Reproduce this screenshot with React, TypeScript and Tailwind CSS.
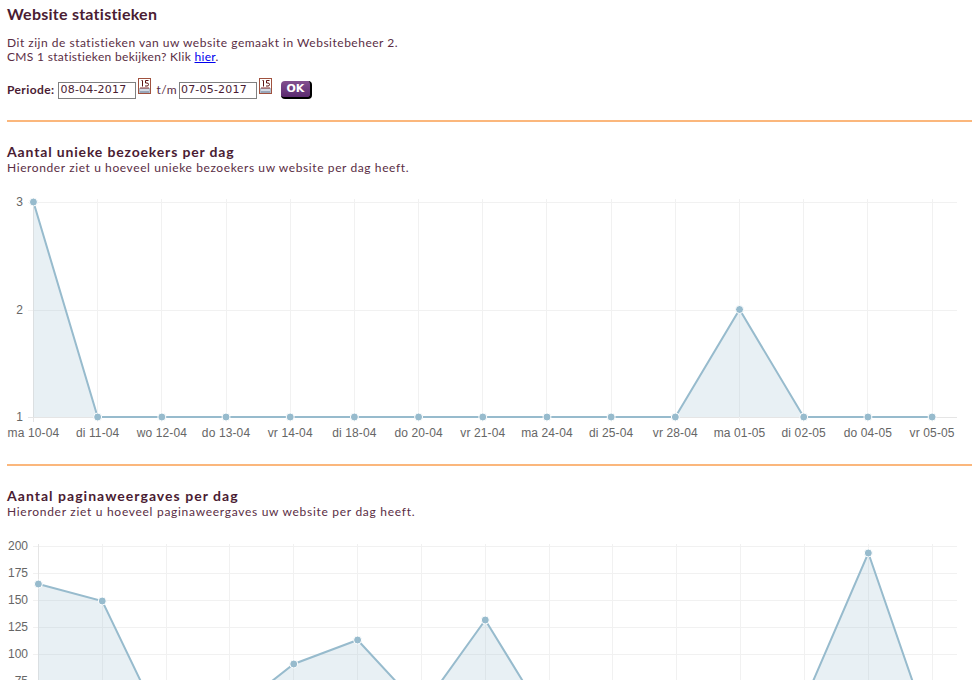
const gothic = "font-['Lato','Noto_Sans',sans-serif]";

type Pt = [number, number];

function Chart({
  xs,
  ys,
  points,
  labels,
  xLabels,
  left,
  top,
  bottom,
  height,
  axisY,
}: {
  xs: number[];
  ys: number[];
  points: Pt[];
  labels: string[];
  xLabels?: string[];
  left: number;
  top: number;
  bottom: number;
  height: number;
  axisY: number;
}) {
  const line = points.map((p) => p.join(",")).join(" ");
  const area = `${points[0][0]},${axisY} ${line} ${points[points.length - 1][0]},${axisY}`;
  return (
    <svg width={972} height={height} viewBox={`0 0 972 ${height}`} className="block">
      {ys.map((y, i) => (
        <g key={y}>
          <line x1={left - 5} x2={957} y1={y + 0.5} y2={y + 0.5} stroke={i === ys.length - 1 && xLabels ? "#e5e5e5" : "#f1f1f1"} />
          <text x={left - 10} y={y + 4} textAnchor="end" fontSize="12" fill="#666" fontFamily="Liberation Sans, sans-serif">
            {labels[i]}
          </text>
        </g>
      ))}
      {xs.map((x, i) => (
        <line key={x} x1={Math.floor(x) + 0.5} x2={Math.floor(x) + 0.5} y1={top} y2={bottom} stroke={i === 0 ? "#e5e5e5" : "#f1f1f1"} />
      ))}
      <polygon points={area} fill="rgba(151,187,205,0.22)" />
      <polyline points={line} fill="none" stroke="#97bbcd" strokeWidth="2" />
      {points.map(([x, y]) => (
        <circle key={x} cx={x} cy={y} r="4" fill="#97bbcd" stroke="#fff" strokeWidth="1" />
      ))}
      {xLabels?.map((t, i) => (
        <text key={t} x={xs[i]} y={bottom + 15} textAnchor="middle" fontSize="12" letterSpacing="0.12" fill="#666" fontFamily="Liberation Sans, sans-serif">
          {t}
        </text>
      ))}
    </svg>
  );
}

function CalendarIcon() {
  return (
    <svg width="13" height="16" viewBox="0 0 13 16" className="block">
      <rect x="0.5" y="0.5" width="12" height="15" fill="#b4bfce" stroke="#a0523f" />
      <rect x="1" y="1" width="11" height="9" fill="#fff" />
      <rect x="2" y="9.5" width="9" height="1" fill="#8a3030" />
      <rect x="2" y="11.5" width="9" height="1" fill="#f4f6f9" />
      <rect x="2" y="13.5" width="9" height="1" fill="#7f8da3" />
      <path d="M3.5 2.5 H4.5 V8.5 M7 8 H9 Q10.5 8 10.5 6.5 Q10.5 5 9 5 H7.5 V2.5 H10.5" fill="none" stroke="#5e1414" strokeWidth="1" />
    </svg>
  );
}

function DateField({ value }: { value: string }) {
  return (
    <span className="flex h-[17px] w-[78px] items-center border border-[#808080] pl-[1px] font-['DejaVu_Sans',sans-serif] text-[11px] tracking-[0.2px] text-[#4a1c33]">
      {value}
    </span>
  );
}

const x1 = Array.from({ length: 15 }, (_, i) => 33.45 + 64.19 * i);
const labels1 = ["ma 10-04", "di 11-04", "wo 12-04", "do 13-04", "vr 14-04", "di 18-04", "do 20-04", "vr 21-04", "ma 24-04", "di 25-04", "vr 28-04", "ma 01-05", "di 02-05", "do 04-05", "vr 05-05"];
const vals1 = [3, 1, 1, 1, 1, 1, 1, 1, 1, 1, 1, 2, 1, 1, 1];
const yOf1 = (v: number) => 417 - (v - 1) * 107.5 - 195;
const pts1: Pt[] = x1.map((x, i) => [x, yOf1(vals1[i])]);

const x2 = Array.from({ length: 15 }, (_, i) => 38.4 + 63.84 * i);
const y2Top = 540;
const raw2 = [584, 601, 734, 714, 664, 640, 709, 620, 724, 760, 760, 760, 701, 553, 738];
const pts2: Pt[] = x2.map((x, i) => [x, raw2[i] - y2Top]);

export default function App() {
  return (
    <div className={`h-[680px] w-[972px] overflow-hidden bg-white text-[#4a1c33] ${gothic}`}>
      <div className="pt-[4px] pl-[7px]">
        <h1 className="text-[16px] leading-[20px] font-bold tracking-[0.25px]">Website statistieken</h1>
        <p className="mt-[12px] text-[12px] leading-[14px] text-[#5a2d44]">
          <span className="tracking-[0.51px]">Dit zijn de statistieken van uw website gemaakt in Websitebeheer 2.</span>
          <br />
          <span className="tracking-[0.32px]">
            CMS 1 statistieken bekijken? Klik <a href="#" className="text-[#0000ee] underline">hier</a>.
          </span>
        </p>
        <div className="mt-[16px] flex h-[20px] items-center text-[12px] tracking-[0.4px]">
          <b>Periode:</b>
          <span className="ml-[4px]"><DateField value="08-04-2017" /></span>
          <span className="mb-[9px] ml-[2px]"><CalendarIcon /></span>
          <span className="ml-[5px] text-[#5a2d44]">t/m</span>
          <span className="ml-[2px]"><DateField value="07-05-2017" /></span>
          <span className="mb-[9px] ml-[2px]"><CalendarIcon /></span>
          <span className="ml-[9px] flex h-[18px] w-[31px] items-center justify-center rounded-[4px] border-r-2 border-b-2 border-black bg-gradient-to-b from-[#83508f] to-[#5b2a70] font-['DejaVu_Sans',sans-serif] text-[11px] font-bold tracking-[0px] text-white">OK</span>
        </div>
      </div>
      <div className="mt-[20px] ml-[7px] h-[2px] bg-[#fbb77c]" />
      <div className="pt-[22px] pl-[7px]">
        <h2 className="text-[14px] leading-[16px] font-bold tracking-[0.84px]">Aantal unieke bezoekers per dag</h2>
        <p className="text-[12px] leading-[16px] tracking-[0.6px] text-[#5a2d44]">Hieronder ziet u hoeveel unieke bezoekers uw website per dag heeft.</p>
      </div>
      <div className="mt-[19px]">
        <Chart xs={x1} ys={[7, 115, 222]} points={pts1} labels={["3", "2", "1"]} xLabels={labels1} left={33} top={4} bottom={227} height={250} axisY={222} />
      </div>
      <div className="mt-[19px] ml-[7px] h-[2px] bg-[#fbb77c]" />
      <div className="pt-[22px] pl-[7px]">
        <h2 className="text-[14px] leading-[16px] font-bold tracking-[1.03px]">Aantal paginaweergaves per dag</h2>
        <p className="text-[12px] leading-[16px] tracking-[0.71px] text-[#5a2d44]">Hieronder ziet u hoeveel paginaweergaves uw website per dag heeft.</p>
      </div>
      <div className="mt-[20px]">
        <Chart xs={x2} ys={[6, 33, 60, 87, 114, 141]} points={pts2} labels={["200", "175", "150", "125", "100", "75"]} left={38} top={4} bottom={240} height={240} axisY={240} />
      </div>
    </div>
  );
}
